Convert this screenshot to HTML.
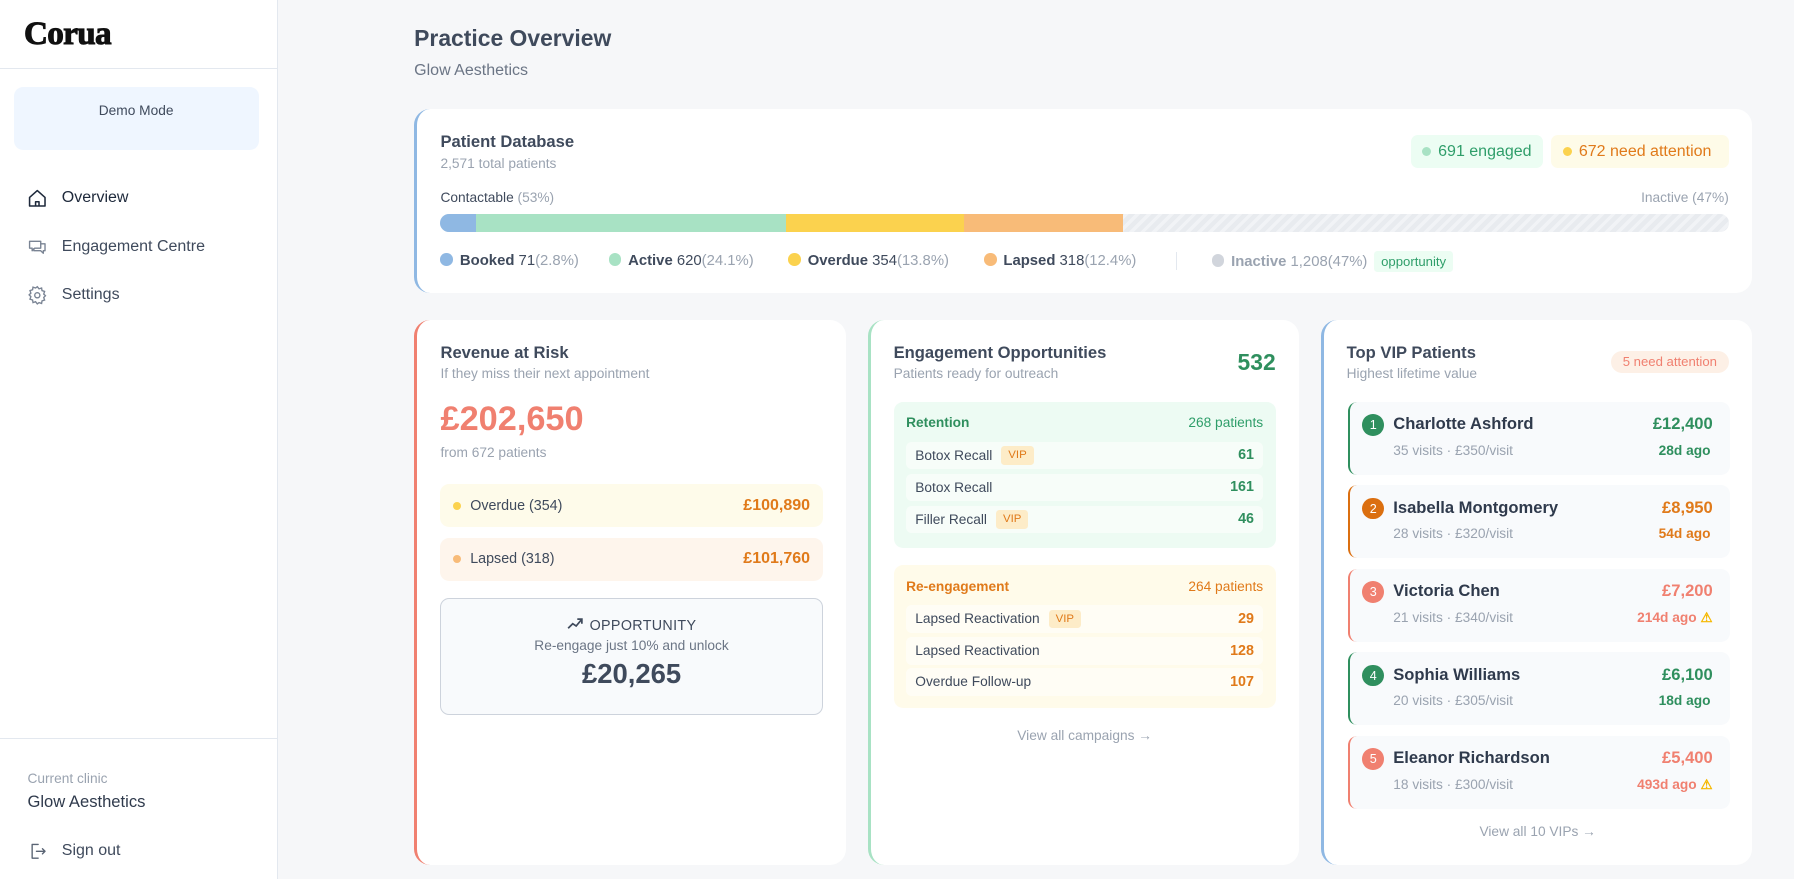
<!DOCTYPE html>
<html><head><meta charset="utf-8">
<style>
*{box-sizing:border-box;margin:0;padding:0}
html,body{width:1794px;height:879px;overflow:hidden;background:#f6f7f9}
#root{zoom:1.14413;width:1568px;height:768px;position:relative;font-family:"Liberation Sans",sans-serif;color:#3f4a5c}
.abs{position:absolute}
.side{left:0;top:0;width:243px;height:768px;background:#fff;border-right:1px solid #e3e8ef}
.logo{left:21px;top:13px;font-family:"Liberation Serif",serif;font-weight:700;font-size:29px;color:#111;letter-spacing:-0.6px;-webkit-text-stroke:0.9px #111}
.hr{left:0;width:242px;height:1px;background:#e3e8ef}
.demo{left:12px;top:76px;width:214px;height:55px;background:#eff6ff;border-radius:8px;font-size:12px;color:#3f4a5c;text-align:center;padding-top:14px}
.nav{left:24px;font-size:14px;color:#1e293b;display:flex;align-items:center;gap:12px;height:20px}
.nav svg{width:18px;height:18px}
.card{background:#fff;border-radius:14px;position:absolute}
.t{font-size:14.5px;font-weight:600;color:#3f4a5c}
.s{font-size:12px;color:#9aa3b0}
.badge{position:absolute;border-radius:6px;font-size:14px;display:flex;align-items:center;gap:6px;padding:0 10px;height:29px}
.dot{width:8px;height:8px;border-radius:50%;display:inline-block}
.leg{position:absolute;top:219px;font-size:13px;line-height:18px;color:#3f4a5c;white-space:nowrap}
.leg b{font-weight:600}
.leg span.g{color:#9aa3b0}
.ld{width:11px;height:11px;border-radius:50%;display:inline-block;vertical-align:-1px;margin-right:6px}
.row{position:absolute;left:385px;width:334px;height:38px;border-radius:8px;display:flex;align-items:center;padding:0 11px;font-size:12.5px;color:#3f4a5c}
.row .v{margin-left:auto;font-size:14px;font-weight:600}
.box{position:absolute;left:781px;width:334px;border-radius:8px}
.bh{position:absolute;left:11px;right:11px;font-size:12px;display:flex}
.bh .r{margin-left:auto}
.ir{position:absolute;left:11px;right:11px;height:24px;border-radius:5px;display:flex;align-items:center;padding:0 8px;font-size:12px;color:#3f4a5c}
.ir .n{margin-left:auto;font-weight:600;font-size:12.5px}
.vip{display:inline-block;background:#fdecc8;color:#e07a1a;font-size:10px;padding:3px 6px;border-radius:3px;margin-left:8px}
.vp{position:absolute;left:1178px;width:334px;height:64px;background:#f8fafc;border-radius:8px;border-left:2px solid}
.num{position:absolute;left:11px;top:11px;width:19px;height:19px;border-radius:50%;color:#fff;font-size:11px;display:flex;align-items:center;justify-content:center}
.nm{position:absolute;left:38px;top:11px;font-size:14.5px;font-weight:600;color:#2f3a4c}
.vs{position:absolute;left:38px;top:36px;font-size:12px;color:#9aa3b0}
.amt{position:absolute;right:15px;top:11px;font-size:14.5px;font-weight:700}
.ago{position:absolute;right:17px;top:36px;font-size:12px;font-weight:700}
</style></head><body><div id="root">
<div class="abs side"></div>
<div class="abs logo">Corua</div>
<div class="abs hr" style="top:59px"></div>
<div class="abs demo">Demo Mode</div>
<div class="abs nav" style="top:163px"><svg viewBox="0 0 24 24" fill="none" stroke="#1e293b" stroke-width="1.8" stroke-linejoin="round"><path d="M3 11L12 3l9 8v10H3z"/><path d="M10 21v-5h4v5"/></svg>Overview</div>
<div class="abs nav" style="top:206px;color:#3f4a5c"><svg viewBox="0 0 24 24" fill="none" stroke="#7a8494" stroke-width="1.6" stroke-linejoin="round"><path d="M3 5h13v8H9l-3 3v-3H3z"/><path d="M8 13v3h8l3 3v-3h2V8h-5"/></svg>Engagement Centre</div>
<div class="abs nav" style="top:248px;color:#3f4a5c"><svg viewBox="0 0 24 24" fill="none" stroke="#7a8494" stroke-width="1.6"><circle cx="12" cy="12" r="3"/><path d="M12 2l2 2.5 3-1 .5 3 3 1-1 3 2 2-2 2 1 3-3 1-.5 3-3-1L12 22l-2-2.5-3 1-.5-3-3-1 1-3-2-2 2-2-1-3 3-1 .5-3 3 1z"/></svg>Settings</div>
<div class="abs hr" style="top:645px"></div>
<div class="abs s" style="left:24px;top:674px">Current clinic</div>
<div class="abs" style="left:24px;top:692px;font-size:14.5px;color:#2f3a4c">Glow Aesthetics</div>
<div class="abs nav" style="top:734px;color:#3f4a5c"><svg viewBox="0 0 24 24" fill="none" stroke="#5a6474" stroke-width="1.6" stroke-linejoin="round" stroke-linecap="round"><path d="M13 4H6v16h7"/><path d="M11 12h10M18 9l3 3-3 3"/></svg>Sign out</div>

<div class="abs" style="left:362px;top:22px;font-size:20px;font-weight:600;color:#3f4a5c">Practice Overview</div>
<div class="abs" style="left:362px;top:54px;font-size:14px;color:#6b7585">Glow Aesthetics</div>

<div class="card" style="left:362px;top:95px;width:1169px;height:161px;border-left:3px solid #8fb8e3"></div>
<div class="abs t" style="left:385px;top:115px">Patient Database</div>
<div class="abs s" style="left:385px;top:136px">2,571 total patients</div>
<div class="badge" style="left:1233px;top:118px;background:#ecfdf3;color:#2f9e6a"><i class="dot" style="background:#a8e2c4"></i>691 engaged</div>
<div class="badge" style="left:1356px;top:118px;width:155px;background:#fefbe8;color:#e07a1a"><i class="dot" style="background:#fbd24e"></i>672 need attention</div>
<div class="abs" style="left:385px;top:166px;font-size:12px;color:#3f4a5c">Contactable <span style="color:#9aa3b0">(53%)</span></div>
<div class="abs" style="right:57px;top:166px;font-size:12px;color:#9aa3b0">Inactive (47%)</div>
<div class="abs" style="left:385px;top:187px;width:1126px;height:16px;border-radius:8px;overflow:hidden;display:flex;background:repeating-linear-gradient(-45deg,#e8ebef 0 4px,#f1f3f6 4px 7px)">
<div style="width:31px;background:#8fb8e3"></div><div style="width:271px;background:#a8e2c4"></div><div style="width:156px;background:#fbd24e"></div><div style="width:139px;background:#f8bb78"></div></div>
<div class="leg" style="left:385px"><i class="ld" style="background:#8fb8e3"></i><b>Booked</b> 71<span class="g">(2.8%)</span></div>
<div class="leg" style="left:532px"><i class="ld" style="background:#a8e2c4"></i><b>Active</b> 620<span class="g">(24.1%)</span></div>
<div class="leg" style="left:689px"><i class="ld" style="background:#fbd24e"></i><b>Overdue</b> 354<span class="g">(13.8%)</span></div>
<div class="leg" style="left:860px"><i class="ld" style="background:#f8bb78"></i><b>Lapsed</b> 318<span class="g">(12.4%)</span></div>
<div class="abs" style="left:1028px;top:220px;width:1px;height:16px;background:#e3e8ef"></div>
<div class="leg" style="left:1059px;color:#9aa3b0"><i class="ld" style="background:#d1d5dc"></i><b>Inactive</b> 1,208<span>(47%)</span><span style="display:inline-block;margin-left:6px;height:19px;padding:0 6px;background:#ecfdf3;color:#2f9e6a;font-size:11.5px;border-radius:3px;line-height:19px">opportunity</span></div>

<!-- card1 -->
<div class="card" style="left:362px;top:280px;width:377px;height:476px;border-left:3px solid #f08070"></div>
<div class="abs t" style="left:385px;top:300px">Revenue at Risk</div>
<div class="abs s" style="left:385px;top:320px">If they miss their next appointment</div>
<div class="abs" style="left:385px;top:350px;font-size:30px;font-weight:600;color:#f08070">£202,650</div>
<div class="abs s" style="left:385px;top:389px">from 672 patients</div>
<div class="row" style="top:423px;background:#fefbea"><i class="dot" style="background:#fbd24e;margin-right:8px;width:7px;height:7px"></i>Overdue (354)<span class="v" style="color:#e07a1a">£100,890</span></div>
<div class="row" style="top:470px;background:#fef5ec"><i class="dot" style="background:#f8bb78;margin-right:8px;width:7px;height:7px"></i>Lapsed (318)<span class="v" style="color:#e07a1a">£101,760</span></div>
<div class="abs" style="left:385px;top:523px;width:334px;height:102px;border:1px solid #cdd3dc;background:#f8fafc;border-radius:8px;text-align:center">
<div style="margin-top:16px;font-size:12.5px;color:#3f4a5c;letter-spacing:.3px"><svg width="14" height="10" viewBox="0 0 14 10" fill="none" stroke="#3f4a5c" stroke-width="1.5" style="margin-right:6px"><path d="M1 9l4-4 3 2 5-6M9 1h4v4"/></svg>OPPORTUNITY</div>
<div style="margin-top:4px;font-size:12px;color:#6b7585">Re-engage just 10% and unlock</div>
<div style="margin-top:4px;font-size:24px;font-weight:700;color:#3f4a5c">£20,265</div></div>

<!-- card2 -->
<div class="card" style="left:759px;top:280px;width:376px;height:476px;border-left:3px solid #a8e2c4"></div>
<div class="abs t" style="left:781px;top:300px">Engagement Opportunities</div>
<div class="abs s" style="left:781px;top:320px">Patients ready for outreach</div>
<div class="abs" style="right:453px;top:305px;font-size:20px;font-weight:700;color:#2f8f5e">532</div>
<div class="box" style="top:351px;height:128px;background:#edfbf3">
<div class="bh" style="top:12px"><span style="color:#2f8f5e;font-weight:600">Retention</span><span class="r" style="color:#2f9e6a">268 patients</span></div>
<div class="ir" style="top:35px;background:#f7fdf9">Botox Recall<span class="vip">VIP</span><span class="n" style="color:#2f8f5e">61</span></div>
<div class="ir" style="top:63px;background:#f7fdf9">Botox Recall<span class="n" style="color:#2f8f5e">161</span></div>
<div class="ir" style="top:91px;background:#f7fdf9">Filler Recall<span class="vip">VIP</span><span class="n" style="color:#2f8f5e">46</span></div>
</div>
<div class="box" style="top:494px;height:125px;background:#fffbea">
<div class="bh" style="top:12px"><span style="color:#e07a1a;font-weight:600">Re-engagement</span><span class="r" style="color:#e07a1a">264 patients</span></div>
<div class="ir" style="top:35px;background:#fffdf5">Lapsed Reactivation<span class="vip">VIP</span><span class="n" style="color:#e07a1a">29</span></div>
<div class="ir" style="top:63px;background:#fffdf5">Lapsed Reactivation<span class="n" style="color:#e07a1a">128</span></div>
<div class="ir" style="top:90px;background:#fffdf5">Overdue Follow-up<span class="n" style="color:#e07a1a">107</span></div>
</div>
<div class="abs s" style="left:781px;width:334px;text-align:center;top:636px">View all campaigns →</div>

<!-- card3 -->
<div class="card" style="left:1155px;top:280px;width:376px;height:476px;border-left:3px solid #8fb8e3"></div>
<div class="abs t" style="left:1177px;top:300px">Top VIP Patients</div>
<div class="abs s" style="left:1177px;top:320px">Highest lifetime value</div>
<div class="abs" style="left:1408px;top:307px;width:103px;height:19px;border-radius:10px;background:#fdf0e6;color:#f08070;font-size:11.5px;text-align:center;line-height:19px">5 need attention</div>

<div class="vp" style="top:351px;border-color:#2f8f5e"><div class="num" style="background:#2f8f5e">1</div><div class="nm">Charlotte Ashford</div><div class="vs">35 visits · £350/visit</div><div class="amt" style="color:#2f8f5e">£12,400</div><div class="ago" style="color:#2f8f5e">28d ago</div></div>
<div class="vp" style="top:424px;border-color:#db6f10"><div class="num" style="background:#db6f10">2</div><div class="nm">Isabella Montgomery</div><div class="vs">28 visits · £320/visit</div><div class="amt" style="color:#e07a1a">£8,950</div><div class="ago" style="color:#e07a1a">54d ago</div></div>
<div class="vp" style="top:497px;border-color:#f08070"><div class="num" style="background:#f08070">3</div><div class="nm">Victoria Chen</div><div class="vs">21 visits · £340/visit</div><div class="amt" style="color:#f08070">£7,200</div><div class="ago" style="color:#f08070;right:15px">214d ago <span style="color:#f5b800">⚠</span></div></div>
<div class="vp" style="top:570px;border-color:#2f8f5e"><div class="num" style="background:#2f8f5e">4</div><div class="nm">Sophia Williams</div><div class="vs">20 visits · £305/visit</div><div class="amt" style="color:#2f8f5e">£6,100</div><div class="ago" style="color:#2f8f5e">18d ago</div></div>
<div class="vp" style="top:643px;border-color:#f08070"><div class="num" style="background:#f08070">5</div><div class="nm">Eleanor Richardson</div><div class="vs">18 visits · £300/visit</div><div class="amt" style="color:#f08070">£5,400</div><div class="ago" style="color:#f08070;right:15px">493d ago <span style="color:#f5b800">⚠</span></div></div>
<div class="abs s" style="left:1177px;width:334px;text-align:center;top:720px">View all 10 VIPs →</div>
</div></body></html>
